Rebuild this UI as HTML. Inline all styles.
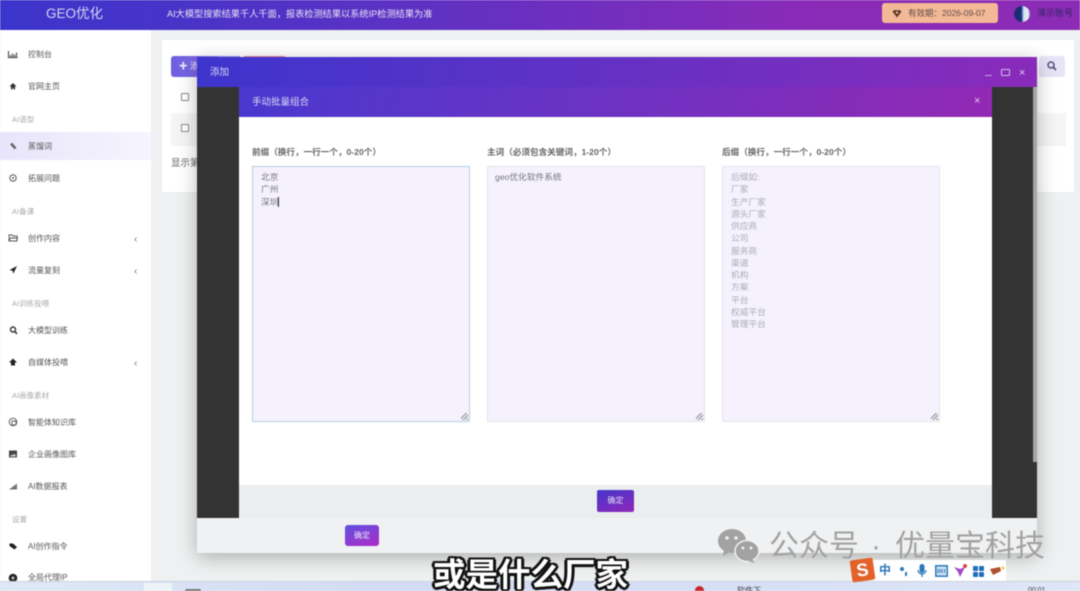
<!DOCTYPE html>
<html><head><meta charset="utf-8"><style>
*{box-sizing:border-box;margin:0;padding:0}
html,body{width:1080px;height:591px;overflow:hidden;background:#eef0f1}
body{font-family:"Liberation Sans","Noto Sans CJK SC",sans-serif;position:relative}
#w{position:absolute;left:0;top:0;width:1080px;height:591px;filter:blur(.6px);overflow:hidden}
.a{position:absolute;white-space:nowrap}
.m{font-size:8px;color:#555;left:28px;line-height:12px}
.g{font-size:7.5px;color:#aaa;left:12px;line-height:12px}
.i{position:absolute;left:7px;width:12px;height:12px}
.c{position:absolute;left:134px;font-size:10px;color:#777;line-height:12px}
.ta{position:absolute;top:166px;height:256px;width:218px;background:#f5f2fe;border:1px solid #e4e4ec;font-size:8.7px;line-height:12.25px;padding:4px 8px;color:#888;white-space:pre}
.l{position:absolute;top:146px;font-size:8.6px;font-weight:bold;color:#666;line-height:12px;white-space:nowrap}
.rs{position:absolute;right:1px;bottom:1px;width:7px;height:7px;background:linear-gradient(135deg,transparent 0 35%,#888 35% 45%,transparent 45% 60%,#888 60% 70%,transparent 70% 85%,#888 85% 95%,transparent 95%)}
</style></head><body><div id="w">
<div class="a" style="left:0;top:0;width:1080px;height:30px;background:linear-gradient(90deg,#3b35cb 0%,#5a32c4 35%,#8a2bb8 75%,#8c2cb6 100%)"></div>
<div class="a" style="left:46px;top:5px;font-size:13.5px;line-height:18px;color:#d5d5f2">GEO优化</div>
<div class="a" style="left:167px;top:7px;font-size:9.2px;line-height:14px;color:#e6e2f6">AI大模型搜索结果千人千面，报表检测结果以系统IP检测结果为准</div>
<div class="a" style="left:882px;top:3px;width:116px;height:20px;border-radius:3px;background:#f3b896"></div>
<svg class="a" style="left:892px;top:9px" width="10" height="9" viewBox="0 0 10 9"><path d="M0.500 2.500Q2.500 0 5 1.500Q7.500 0 9.500 2.500L5 8.500z" fill="#5a3a2a"/><circle cx="5" cy="3.600" r="1.200" fill="#f3b896"/></svg>
<div class="a" style="left:908px;top:7px;font-size:8.5px;line-height:12px;color:#5f4c46">有效期：2026-09-07</div>
<div class="a" style="left:1014px;top:6px;width:16px;height:16px;border-radius:50%;background:linear-gradient(90deg,#1c2c70 0 45%,#3a5cb0 50%,#cfdcf0 60%,#e8eef8 85%,#8aa6d8)"></div>
<div class="a" style="left:1037px;top:7px;font-size:9px;line-height:12px;color:#2f2560">演示账号</div>

<div class="a" style="left:0;top:30px;width:151px;height:551px;background:#fff"></div>
<div class="a" style="left:0;top:132px;width:151px;height:28px;background:linear-gradient(90deg,#e8e4fb,#f7f5fe)"></div>
<div class="a m" style="top:49px">控制台</div>
<div class="a m" style="top:81px">官网主页</div>
<div class="a g" style="top:114px">AI语型</div>
<div class="a m" style="top:141px">蒸馏词</div>
<div class="a m" style="top:173px">拓展问题</div>
<div class="a g" style="top:206px">AI备课</div>
<div class="a m" style="top:233px">创作内容</div>
<div class="a m" style="top:265px">流量复刻</div>
<div class="a g" style="top:298px">AI训练投喂</div>
<div class="a m" style="top:325px">大模型训练</div>
<div class="a m" style="top:357px">自媒体投喂</div>
<div class="a g" style="top:390px">AI画像素材</div>
<div class="a m" style="top:417px">智能体知识库</div>
<div class="a m" style="top:449px">企业画像图库</div>
<div class="a m" style="top:481px">AI数据报表</div>
<div class="a g" style="top:514px">设置</div>
<div class="a m" style="top:541px">AI创作指令</div>
<div class="a m" style="top:572px">全局代理IP</div>
<div class="c" style="top:234px">‹</div><div class="c" style="top:266px">‹</div><div class="c" style="top:358px">‹</div>

<svg class="i" style="top:48px" viewBox="0 0 12 12"><path d="M1.500 3v6.500h9M3.500 9V7M5.500 9V5.500M7.500 9V6.500M9.500 9V4.500" stroke="#555" stroke-width="1.200" fill="none"/></svg>
<svg class="i" style="top:80px" viewBox="0 0 12 12"><path d="M6 3L2.500 6.500H4V9.500H5.500V8H6.500V9.500H8V6.500H9.500Z" fill="#333"/></svg>
<svg class="i" style="top:140px" viewBox="0 0 12 12"><path d="M4 3.500L8.500 8.500" stroke="#666" stroke-width="2.600"/></svg>
<svg class="i" style="top:172px" viewBox="0 0 12 12"><circle cx="6" cy="6" r="3.200" fill="none" stroke="#555" stroke-width="1"/><circle cx="6" cy="6" r="1" fill="#555"/></svg>
<svg class="i" style="top:232px" viewBox="0 0 12 12"><path d="M2 3h3l1 1h4v5H2zM3.500 6h7l-1 3H2z" fill="none" stroke="#555" stroke-width=".9"/></svg>
<svg class="i" style="top:264px" viewBox="0 0 12 12"><path d="M10 2L2.500 6l3 .8.800 3z" fill="#222"/></svg>
<svg class="i" style="top:324px" viewBox="0 0 12 12"><circle cx="6" cy="5.500" r="2.500" fill="none" stroke="#333" stroke-width="1.400"/><path d="M7.800 7.500L10 9.800" stroke="#333" stroke-width="1.600"/></svg>
<svg class="i" style="top:356px" viewBox="0 0 12 12"><path d="M6 2.500L10 6.500H8V9.500H4V6.500H2Z" fill="#222"/></svg>
<svg class="i" style="top:416px" viewBox="0 0 12 12"><circle cx="6" cy="6" r="3.800" fill="none" stroke="#555" stroke-width=".9"/><rect x="5" y="5" width="4" height="4" fill="none" stroke="#555" stroke-width=".9"/></svg>
<svg class="i" style="top:448px" viewBox="0 0 12 12"><rect x="2" y="2.500" width="8" height="7" fill="#444"/><path d="M3 8.500l2-2 1 1 1.500-2 1.500 3z" fill="#ddd"/></svg>
<svg class="i" style="top:480px" viewBox="0 0 12 12"><path d="M2 9.500L10 3.500v6z" fill="#777"/></svg>
<svg class="i" style="top:540px" viewBox="0 0 12 12"><path d="M2.500 3.500h3.500l4 3.500-2.500 2.500-5-3.500z" fill="#222"/></svg>
<svg class="i" style="top:572px" viewBox="0 0 12 12"><circle cx="6" cy="6" r="4.300" fill="#222"/><circle cx="6" cy="6" r="1.500" fill="#bbb"/></svg>

<div class="a" style="left:162px;top:40px;width:912px;height:152px;background:#fff"></div>
<div class="a" style="left:171px;top:56px;width:50px;height:21px;background:linear-gradient(90deg,#6e5fe0,#8a70e8);border-radius:3px;color:#e8e6fb;font-size:8.500px;line-height:21px;padding-left:8px"><b>✚</b> 添</div>
<div class="a" style="left:218px;top:56px;width:22px;height:1.500px;background:#9a9ae8"></div>
<div class="a" style="left:244px;top:56px;width:41px;height:1.500px;background:#e88a98"></div>
<div class="a" style="left:1039px;top:56px;width:26px;height:21px;border-radius:3px;background:#e6e4f6"></div>
<svg class="a" style="left:1046px;top:60px" width="12" height="12" viewBox="0 0 12 12"><circle cx="5" cy="5" r="3" fill="none" stroke="#554d7c" stroke-width="1.500"/><path d="M7.200 7.200L10 10" stroke="#554d7c" stroke-width="1.700"/></svg>
<div class="a" style="left:171px;top:113px;width:895px;height:33px;background:#f4f5f6"></div>
<div class="a" style="left:181px;top:93px;width:8px;height:8px;border:1px solid #888;border-radius:1px;background:#fff"></div>
<div class="a" style="left:181px;top:124px;width:8px;height:8px;border:1px solid #888;border-radius:1px;background:#fff"></div>
<div class="a" style="left:171px;top:157px;font-size:9.500px;line-height:14px;color:#666">显示第</div>

<div class="a" style="left:197px;top:57px;width:840px;height:496px;box-shadow:0 4px 18px rgba(0,0,0,.28);background:#f0f1f2"></div>
<div class="a" style="left:197px;top:57px;width:840px;height:30px;background:linear-gradient(100deg,#3d35cd 0%,#5d32c6 40%,#8a2bba 100%)"></div>
<div class="a" style="left:210px;top:66px;font-size:9.500px;line-height:14px;color:#dcd9f6">添加</div>
<div class="a" style="left:985px;top:75px;width:7px;height:1px;background:#c7a2dc"></div>
<div class="a" style="left:1001px;top:69px;width:9px;height:7px;border:1.500px solid #d6bce8;border-radius:1px"></div>
<div class="a" style="left:1019px;top:67px;font-size:11px;line-height:12px;color:#e0c8ee">×</div>
<div class="a" style="left:197px;top:87px;width:836px;height:431px;background:#333"></div>
<div class="a" style="left:1033px;top:87px;width:4px;height:375px;background:#a5a5a5"></div>
<div class="a" style="left:1033px;top:462px;width:4px;height:56px;background:#333"></div>

<div class="a" style="left:239px;top:87px;width:753px;height:30px;background:linear-gradient(100deg,#4a38cf 0%,#6a33c4 45%,#9229b4 100%)"></div>
<div class="a" style="left:252px;top:96px;font-size:9.500px;line-height:14px;color:#dcd9f6">手动批量组合</div>
<div class="a" style="left:974px;top:95px;font-size:11px;line-height:13px;color:#e4c8ee">×</div>
<div class="a" style="left:239px;top:117px;width:753px;height:368px;background:#fff"></div>
<div class="a" style="left:239px;top:485px;width:753px;height:33px;background:#ebeeee"></div>
<div class="l" style="left:252px">前缀（换行，一行一个，0-20个）</div>
<div class="l" style="left:487px">主词（必须包含关键词，1-20个）</div>
<div class="l" style="left:722px">后缀（换行，一行一个，0-20个）</div>
<div class="ta" style="left:252px;border-color:#b4d0e0;color:#777">北京
广州
深圳<span style="border-left:1px solid #333;margin-left:0"></span><div class="rs"></div></div>
<div class="ta" style="left:487px;color:#777;padding-left:7px">geo优化软件系统<div class="rs"></div></div>
<div class="ta" style="left:722px;color:#acacb2">后缀如:
厂家
生产厂家
源头厂家
供应商
公司
服务商
渠道
机构
方案
平台
权威平台
管理平台<div class="rs"></div></div>
<div class="a" style="left:597px;top:490px;width:37px;height:22px;border-radius:2px;background:linear-gradient(160deg,#4535cc,#9028b8);color:#e6dff6;font-size:8px;line-height:22px;text-align:center">确定</div>
<div class="a" style="left:345px;top:525px;width:34px;height:21px;border-radius:3px;background:linear-gradient(160deg,#5f50e0,#ad2cc8);color:#ece6f8;font-size:8px;line-height:21px;text-align:center">确定</div>

<div class="a" style="left:0;top:581px;width:1080px;height:10px;background:linear-gradient(90deg,#dfe9f5,#d2dcf4 35%,#d8e0f6 70%,#dfe6f6);border-top:1px solid #c9d2de"></div>
<div class="a" style="left:144px;top:583px;width:28px;height:8px;background:#eef3f8"></div>
<div class="a" style="left:185px;top:589px;width:16px;height:2px;background:#777;border-radius:2px 2px 0 0"></div>
<div class="a" style="left:695px;top:586px;width:9px;height:9px;border-radius:50%;background:#c8282c"></div>
<div class="a" style="left:737px;top:586px;font-size:8px;line-height:10px;color:#444">软件下</div>
<div class="a" style="left:1028px;top:587px;font-size:7px;line-height:8px;color:#444">00:01</div>

<svg class="a" style="left:717px;top:528px" width="44" height="36" viewBox="0 0 44 36"><ellipse cx="15" cy="13" rx="14" ry="12" fill="#a2a2a2"/><path d="M7 21l-1 7 7-4z" fill="#a2a2a2"/><ellipse cx="30" cy="23" rx="12" ry="10.500" fill="#a2a2a2" stroke="#eef0f1" stroke-width="1.500"/><path d="M35 31l3 4-7-2z" fill="#a2a2a2"/><circle cx="10" cy="10" r="1.800" fill="#eee"/><circle cx="19" cy="10" r="1.800" fill="#eee"/><circle cx="26" cy="20" r="1.500" fill="#eee"/><circle cx="34" cy="20" r="1.500" fill="#eee"/></svg>
<div class="a" style="left:769px;top:529px;font-size:30px;line-height:36px;color:#a2a2a2">公众号</div>
<div class="a" style="left:871px;top:529px;font-size:30px;line-height:36px;color:#a2a2a2">·</div>
<div class="a" style="left:895px;top:529px;font-size:30px;line-height:36px;color:#a2a2a2">优量宝科技</div>

<div class="a" style="left:433px;top:555px;font-size:32.500px;font-weight:bold;line-height:40px;color:#fff;text-shadow:2px 0 0 #111,-2px 0 0 #111,0 2px 0 #111,0 -2px 0 #111,2px 2px 0 #111,-2px 2px 0 #111,2px -2px 0 #111,-2px -2px 0 #111,3px 0 0 #111,-3px 0 0 #111,0 3px 0 #111">或是什么厂家</div>

<div class="a" style="left:872px;top:560px;width:134px;height:21px;background:#fff"></div>
<div class="a" style="left:851px;top:559px;width:23px;height:22px;background:#e2622a;transform:rotate(-8deg);border-radius:2px;color:#fff;font-size:18px;font-weight:bold;line-height:22px;text-align:center">S</div>
<div class="a" style="left:879px;top:563px;font-size:12px;line-height:15px;font-weight:bold;color:#2c78b8">中</div>
<div class="a" style="left:900px;top:567px;width:4px;height:4px;border-radius:50%;background:#2c78b8"></div>
<div class="a" style="left:905px;top:572px;width:2px;height:4px;background:#2c78b8"></div>
<svg class="a" style="left:916px;top:563px" width="12" height="16" viewBox="0 0 12 16"><rect x="3.500" y="1" width="5" height="9" rx="2.500" fill="#2c78b8"/><path d="M2 7a4 4 0 0 0 8 0M6 11v3" stroke="#2c78b8" fill="none" stroke-width="1.200"/></svg>
<svg class="a" style="left:935px;top:565px" width="13" height="12" viewBox="0 0 13 12"><rect x=".8" y=".8" width="11.400" height="10.400" fill="#cfe3f2" stroke="#2c78b8" stroke-width="1.500"/><path d="M3 4v4M5 4v4M7 4v4M9.500 4v4" stroke="#2c78b8"/></svg>
<svg class="a" style="left:953px;top:563px" width="15" height="15" viewBox="0 0 15 15"><path d="M1 4l6 2 5-2-3 6-2 4-2-5z" fill="#a048c8"/><circle cx="12" cy="3" r="2" fill="#d84040"/></svg>
<svg class="a" style="left:973px;top:566px" width="11" height="11" viewBox="0 0 11 11"><g fill="#1f6fb8"><rect width="5" height="5" rx="1"/><rect x="6" width="5" height="5" rx="1"/><rect y="6" width="5" height="5" rx="1"/><rect x="6" y="6" width="5" height="5" rx="1"/></g></svg>
<svg class="a" style="left:989px;top:566px" width="16" height="10" viewBox="0 0 16 10"><path d="M1 3l10-2 1 4-8 4z" fill="#b05030"/><circle cx="14" cy="2" r="1.500" fill="#f0d040"/></svg>
</div></body></html>
